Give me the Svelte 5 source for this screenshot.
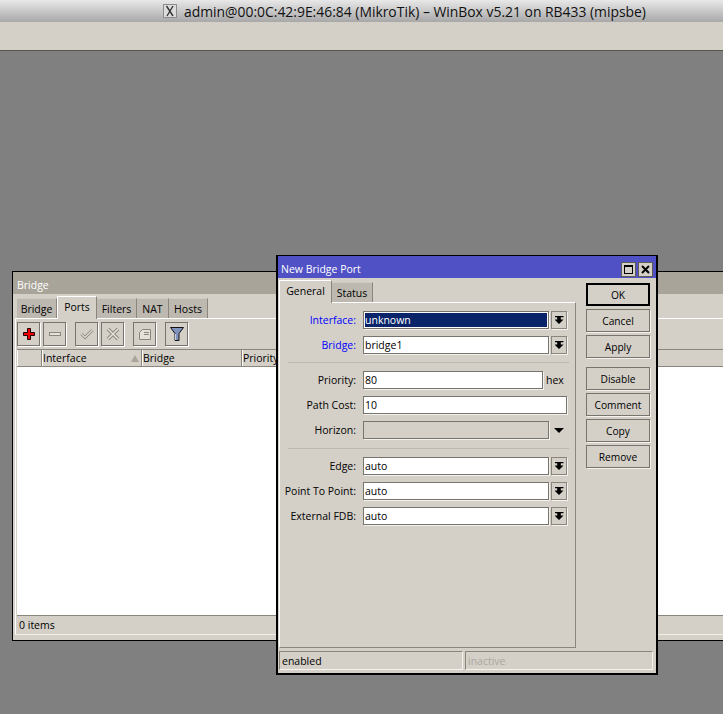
<script>
    const bridgeTabs = [
        { label: "Bridge", width: 40 },
        { label: "Ports", width: 40, active: true },
        { label: "Filters", width: 40 },
        { label: "NAT", width: 32 },
        { label: "Hosts", width: 39 }
    ];
    const columns = [
        { label: "", width: 25 },
        { label: "Interface", width: 100, sorted: true },
        { label: "Bridge", width: 100 },
        { label: "Priority", width: 100 }
    ];
    const topRows = [
        { label: "Interface:", value: "unknown", blue: true, selected: true },
        { label: "Bridge:", value: "bridge1", blue: true }
    ];
    const bottomRows = [
        { label: "Edge:", value: "auto" },
        { label: "Point To Point:", value: "auto" },
        { label: "External FDB:", value: "auto" }
    ];
</script>

<div class="screen">
    <header class="macbar">
        <svg class="xicon" width="14" height="14" viewBox="0 0 14 14">
            <rect x="0.5" y="0.5" width="13" height="13" fill="#dcdcdc" stroke="#8c8c8c" />
            <path d="M3.5 2 L10 12 M10 2 L4 12" stroke="#333" stroke-width="1.4" fill="none" />
        </svg>
        <span>admin@00:0C:42:9E:46:84 (MikroTik) – WinBox v5.21 on RB433 (mipsbe)</span>
    </header>
    <div class="menubar"></div>

    <main class="desktop">
        <!-- background list window -->
        <section class="window bridge-win">
            <div class="title inactive"><span>Bridge</span></div>
            <div class="tabs">
                {#each bridgeTabs as t}
                    <span class="tab" class:active={t.active} style="width: {t.width}px">{t.label}</span>
                {/each}
            </div>
            <div class="pane">
                <div class="toolbar">
                    <button class="tool">
                        <svg width="14" height="14" viewBox="0 0 14 14"><path d="M5.5 1.5h3v4h4v3h-4v4h-3v-4h-4v-3h4z" fill="#f00000" stroke="#200" /></svg>
                    </button>
                    <button class="tool gap-s">
                        <svg width="14" height="14" viewBox="0 0 14 14"><rect x="1.5" y="5.5" width="11" height="3" fill="#e4e1da" stroke="#8a867e" /></svg>
                    </button>
                    <button class="tool gap-m">
                        <svg width="16" height="14" viewBox="0 0 16 14"><path d="M2.5 7l3.5 3.5 7.5-7.5" fill="none" stroke="#8a867e" stroke-width="3" /><path d="M2.5 7l3.5 3.5 7.5-7.5" fill="none" stroke="#e4e1da" stroke-width="1.2" /></svg>
                    </button>
                    <button class="tool gap-s">
                        <svg width="14" height="14" viewBox="0 0 14 14"><path d="M2 2l10 10M12 2L2 12" fill="none" stroke="#8a867e" stroke-width="3.6" /><path d="M2 2l10 10M12 2L2 12" fill="none" stroke="#e4e1da" stroke-width="1.6" /></svg>
                    </button>
                    <button class="tool gap-m">
                        <svg width="14" height="13" viewBox="0 0 14 13"><path d="M1.5 4.5l3-3h8v10h-11z" fill="#e4e1da" stroke="#8a867e" /><path d="M6 4.5h5M6 6.5h5" stroke="#8a867e" /></svg>
                    </button>
                    <button class="tool gap-m">
                        <svg width="16" height="16" viewBox="0 0 16 16"><path d="M1.5 1.5h13L10 7.5v7H6v-7z" fill="#7f93bd" stroke="#111" /><path d="M6.5 8v6" stroke="#c8d0e0" /></svg>
                    </button>
                </div>
                <div class="table-head">
                    {#each columns as c}
                        <span class="th" style="width: {c.width}px">
                            {c.label}
                            {#if c.sorted}<i class="sort"></i>{/if}
                        </span>
                    {/each}
                    <span class="th fill"></span>
                </div>
                <div class="table-body"></div>
                <div class="list-status">0 items</div>
            </div>
        </section>

        <!-- dialog on top -->
        <section class="window port-win">
            <div class="title active">
                <span>New Bridge Port</span>
                <span class="winbtns">
                    <button class="winbtn"><i class="maxi"></i></button>
                    <button class="winbtn">
                        <svg width="9" height="9" viewBox="0 0 9 9"><path d="M1 1l7 7M8 1L1 8" stroke="#000" stroke-width="2" /></svg>
                    </button>
                </span>
            </div>
            <div class="dialog-body">
                <div class="left-col">
                    <div class="tabs small">
                        <span class="tab active" style="width: 53px">General</span>
                        <span class="tab" style="width: 41px">Status</span>
                    </div>
                    <div class="panel">
                        {#each topRows as r}
                            <div class="row">
                                <span class="lbl" class:blue={r.blue}>{r.label}</span>
                                <div class="field arrowed" class:selected={r.selected}><span>{r.value}</span></div>
                                <button class="drop"><i class="stem"></i></button>
                            </div>
                        {/each}
                        <div class="sep"></div>
                        <div class="row">
                            <span class="lbl">Priority:</span>
                            <div class="field priority"><span>80</span></div>
                            <span class="unit">hex</span>
                        </div>
                        <div class="row">
                            <span class="lbl">Path Cost:</span>
                            <div class="field wide"><span>10</span></div>
                        </div>
                        <div class="row">
                            <span class="lbl">Horizon:</span>
                            <div class="field arrowed off"></div>
                            <i class="tri"></i>
                        </div>
                        <div class="sep lower"></div>
                        {#each bottomRows as r}
                            <div class="row">
                                <span class="lbl">{r.label}</span>
                                <div class="field arrowed"><span>{r.value}</span></div>
                                <button class="drop"><i class="stem"></i></button>
                            </div>
                        {/each}
                    </div>
                </div>
                <div class="actions">
                    <button class="act default">OK</button>
                    <button class="act">Cancel</button>
                    <button class="act">Apply</button>
                    <button class="act spaced">Disable</button>
                    <button class="act">Comment</button>
                    <button class="act">Copy</button>
                    <button class="act">Remove</button>
                </div>
            </div>
            <div class="statusbar">
                <span class="cell first">enabled</span>
                <span class="cell second">inactive</span>
            </div>
        </section>
    </main>
</div>

<style>
    :global(body) {
        margin: 0;
        background: #808080;
    }

    .screen {
        width: 723px;
        height: 714px;
        overflow: hidden;
        display: flex;
        flex-direction: column;
        font-family: "Open Sans", sans-serif;
        font-size: 10.5px;
        color: #000;
    }

    .macbar {
        height: 22px;
        flex: none;
        box-sizing: border-box;
        background: linear-gradient(#e8e8e8, #a8a8a8);
        display: flex;
        align-items: center;
        padding-left: 163px;
        gap: 7px;
        font-size: 13.9px;
        color: #111;
        white-space: nowrap;
    }

    .xicon {
        flex: none;
    }

    .menubar {
        height: 28px;
        flex: none;
        background: #d4d0c8;
        border-bottom: 1px solid #55544f;
    }

    .desktop {
        position: relative;
        flex: 1;
        background: #808080;
    }

    .window {
        position: absolute;
        box-sizing: border-box;
        background: #d4d0c8;
        border: 1px solid #000;
        display: flex;
        flex-direction: column;
    }

    .bridge-win {
        left: 12px;
        top: 220px;
        width: 760px;
        height: 370px;
    }

    .port-win {
        left: 276px;
        top: 204px;
        width: 382px;
        height: 420px;
        border-width: 1px 2px 2px 2px;
    }

    .title {
        height: 22px;
        flex: none;
        box-sizing: border-box;
        display: flex;
        align-items: center;
        justify-content: space-between;
        color: #fff;
        padding-left: 4px;
    }

    .title > span:first-child {
        padding-top: 3px;
    }

    .title.inactive {
        background: #a8a499;
    }

    .title.active {
        background: #4f51c4;
        padding-left: 3px;
    }

    .winbtns {
        display: flex;
        gap: 2px;
        padding: 4px 3px 0 0;
    }

    .winbtn {
        width: 15px;
        height: 15px;
        padding: 0;
        background: #d4d0c8;
        border: 1px solid #5f5c55;
        display: flex;
        align-items: center;
        justify-content: center;
    }

    .maxi {
        display: block;
        width: 7px;
        height: 6px;
        border: 1px solid #000;
        border-top-width: 2px;
    }

    .tabs {
        display: flex;
        align-items: flex-end;
        height: 24px;
        padding-left: 4px;
        flex: none;
    }

    .tab {
        height: 20px;
        box-sizing: border-box;
        display: flex;
        align-items: center;
        justify-content: center;
        background: #bdb9b0;
        border-top: 1px solid #cfcbc3;
        border-right: 1px solid #8a867e;
    }

    .tab.active {
        height: 23px;
        background: #d4d0c8;
        border-top: 1px solid #fff;
        border-left: 1px solid #fff;
        padding-bottom: 2px;
        margin-bottom: -1px;
        position: relative;
        z-index: 1;
    }

    .pane {
        flex: 1;
        min-height: 0;
        display: flex;
        flex-direction: column;
        margin: 0 0 5px 2px;
        padding-left: 1px;
        border-top: 1px solid #fff;
        border-left: 1px solid #fff;
        border-bottom: 1px solid #f0eee8;
    }

    .toolbar {
        display: flex;
        padding: 3px 0;
        flex: none;
    }

    .tool {
        width: 23px;
        height: 24px;
        padding: 0;
        box-sizing: border-box;
        background: #d4d0c8;
        border: 1px solid #77746d;
        box-shadow: 1px 1px 0 #fff;
        display: flex;
        align-items: center;
        justify-content: center;
    }

    .gap-s {
        margin-left: 3px;
    }

    .gap-m {
        margin-left: 9px;
    }

    .table-head {
        display: flex;
        height: 17px;
        flex: none;
        border-top: 1px solid #8a867e;
        box-sizing: border-box;
    }

    .th {
        box-sizing: border-box;
        position: relative;
        display: flex;
        align-items: center;
        padding-left: 0;
        border-left: 1px solid #fff;
        border-right: 1px solid #8a867e;
    }

    .th.fill {
        flex: 1;
    }

    .sort {
        position: absolute;
        right: 2px;
        top: 5px;
        width: 0;
        height: 0;
        border-left: 4px solid transparent;
        border-right: 4px solid transparent;
        border-bottom: 7px solid #a8a499;
    }

    .table-body {
        flex: 1;
        background: #fff;
        border-top: 1px solid #8a867e;
        border-bottom: 1px solid #8a867e;
    }

    .list-status {
        height: 18px;
        flex: none;
        box-sizing: border-box;
        padding-left: 2px;
        display: flex;
        align-items: center;
    }

    .dialog-body {
        flex: 1;
        display: flex;
        min-height: 0;
    }

    .left-col {
        width: 298px;
        flex: none;
        display: flex;
        flex-direction: column;
    }

    .tabs.small {
        padding-left: 1px;
    }

    .panel {
        flex: 1;
        box-sizing: border-box;
        margin-left: 1px;
        width: 297px;
        border-top: 1px solid #fff;
        border-left: 1px solid #fff;
        border-right: 1px solid #8a867e;
        border-bottom: 1px solid #8a867e;
        padding-top: 8px;
    }

    .row {
        display: flex;
        align-items: center;
        height: 18px;
        margin-bottom: 7px;
    }

    .lbl {
        width: 76px;
        margin-right: 7px;
        flex: none;
        white-space: nowrap;
        display: flex;
        justify-content: flex-end;
    }

    .lbl.blue {
        color: #0000ff;
    }

    .field {
        height: 18px;
        box-sizing: border-box;
        background: #fff;
        border: 1px solid #77746d;
        box-shadow: 1px 1px 0 #f4f2ee;
        padding-left: 1px;
        display: flex;
        align-items: center;
    }

    .field.arrowed {
        width: 186px;
    }

    .field.selected {
        background: #0a246a;
        color: #fff;
        outline: 1px solid #fff;
        outline-offset: -2px;
    }

    .field.priority {
        width: 180px;
    }

    .field.wide {
        width: 204px;
    }

    .field.off {
        background: #d4d0c8;
    }

    .unit {
        margin-left: 3px;
    }

    .drop {
        width: 16px;
        height: 18px;
        margin-left: 2px;
        padding: 0;
        background: #d4d0c8;
        box-sizing: border-box;
        border: 1px solid #8a867e;
        box-shadow: 1px 1px 0 #f4f2ee;
        display: flex;
        align-items: center;
        justify-content: center;
    }

    .stem {
        display: block;
        width: 9px;
        height: 8px;
        background-color: #000;
        clip-path: polygon(0 0, 100% 0, 100% 15%, 70% 15%, 70% 45%, 100% 45%, 50% 100%, 0 45%, 30% 45%, 30% 15%, 0 15%);
    }

    .tri {
        margin-left: 5px;
        width: 0;
        height: 0;
        border-left: 5px solid transparent;
        border-right: 5px solid transparent;
        border-top: 5px solid #000;
    }

    .sep {
        height: 1px;
        margin: 8px 6px 8px 8px;
        background: #bdb9b0;
    }

    .sep.lower {
        margin-top: 9px;
    }

    .actions {
        display: flex;
        flex-direction: column;
        padding: 5px 0 0 10px;
        gap: 3px;
    }

    .act {
        width: 64px;
        height: 23px;
        padding: 0;
        box-sizing: border-box;
        background: #d4d0c8;
        border: 1px solid #77746d;
        box-shadow: 1px 1px 0 #f4f2ee;
        font-family: inherit;
        font-size: 10.2px;
        color: #000;
    }

    .act.default {
        border: 2px solid #000;
        box-shadow: none;
    }

    .act.spaced {
        margin-top: 6px;
    }

    .statusbar {
        height: 19px;
        flex: none;
        display: flex;
        gap: 2px;
        margin: 3px 3px 3px 1px;
    }

    .cell {
        box-sizing: border-box;
        display: flex;
        align-items: center;
        padding-left: 2px;
        border: 1px solid;
        border-color: #8a867e #f4f2ee #f4f2ee #8a867e;
    }

    .cell.first {
        width: 184px;
    }

    .cell.second {
        flex: 1;
        color: #aaa69d;
    }
</style>
